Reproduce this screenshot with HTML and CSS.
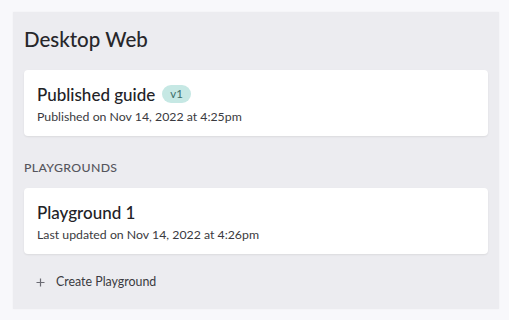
FILE: index.html
```html
<!DOCTYPE html>
<html>
<head>
<meta charset="utf-8">
<link rel="stylesheet" href="styles.css">
</head>
<body>
<div class="panel">
  <h1 class="title">Desktop Web</h1>
  <div class="card">
    <div class="card-head">
      <span class="card-title">Published guide</span>
      <span class="badge">v1</span>
    </div>
    <div class="card-sub">Published on Nov 14, 2022 at 4:25pm</div>
  </div>
  <div class="section-label">PLAYGROUNDS</div>
  <div class="card">
    <div class="card-head">
      <span class="card-title">Playground 1</span>
    </div>
    <div class="card-sub">Last updated on Nov 14, 2022 at 4:26pm</div>
  </div>
  <div class="create">
    <svg class="plus" width="9" height="9" viewBox="0 0 9 9"><path d="M4.5 0.5v8M0.5 4.5h8" stroke="#6b6b73" stroke-width="1.2" fill="none"/></svg>
    <span>Create Playground</span>
  </div>
</div>
</body>
</html>
```
FILE: styles.css
```css
html, body {
  margin: 0;
  padding: 0;
}
body {
  background: #f8f8fb;
  font-family: "Lato", "Noto Sans", sans-serif;
  color: #222226;
  width: 509px;
  height: 320px;
  overflow: hidden;
}
.panel {
  margin: 12px 10px 0 13px;
  width: 486px;
  height: 297px;
  box-sizing: border-box;
  background: #ececf0;
  padding: 14px 11px 0 11px;
  display: flex;
  flex-direction: column;
  box-shadow: 0 0 2px rgba(0,0,0,0.04);
}
.title {
  margin: 0;
  font-size: 20.5px;
  font-weight: 500;
  line-height: 26px;
  color: #27272b;
  height: 44px;
}
.card {
  background: #ffffff;
  border-radius: 4px;
  box-shadow: 0 1px 2px rgba(0,0,0,0.08);
  height: 66px;
  box-sizing: border-box;
  padding: 13px 13px 0 13px;
}
.card-head {
  display: flex;
  align-items: center;
  gap: 7px;
  height: 22px;
}
.card-title {
  font-size: 17px;
  font-weight: 500;
  color: #222226;
}
.badge {
  background: #c6e8e4;
  color: #3d6f6a;
  font-size: 11.5px;
  border-radius: 9px;
  padding: 0 8px;
  line-height: 18px;
  height: 18px;
}
.card-sub {
  margin-top: 4px;
  font-size: 12.3px;
  line-height: 16px;
  color: #3a3a40;
}
.section-label {
  font-size: 12.3px;
  letter-spacing: 0.35px;
  color: #55555c;
  font-weight: 500;
  line-height: 16px;
  margin-top: 24px;
  margin-bottom: 12px;
}
.create {
  display: flex;
  align-items: center;
  gap: 11px;
  padding-left: 12px;
  margin-top: 20px;
  font-size: 12.4px;
  color: #3a3a40;
  line-height: 16px;
}
.plus {
  display: block;
}
```
